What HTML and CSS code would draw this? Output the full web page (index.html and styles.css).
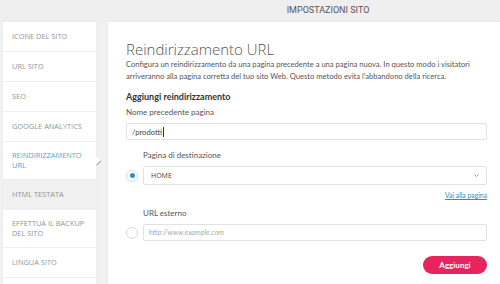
FILE: index.html
```html
<!DOCTYPE html>
<html lang="it">
<head>
    <meta charset="UTF-8" />
    <title>Impostazioni sito</title>
    <link rel="stylesheet" href="styles.css">
</head>
<body>
    <header class="topbar">IMPOSTAZIONI SITO</header>

    <div class="layout">
        <nav class="side">
            <ul>
                <li>ICONE DEL SITO</li>
                <li>URL SITO</li>
                <li>SEO</li>
                <li>GOOGLE ANALYTICS</li>
                <li class="active">REINDIRIZZAMENTO URL</li>
                <li class="hover">HTML TESTATA</li>
                <li class="tall">EFFETTUA IL BACKUP DEL SITO</li>
                <li>LINGUA SITO</li>
            </ul>
        </nav>

        <main class="panel">
            <h1>Reindirizzamento URL</h1>
            <p class="desc">Configura un reindirizzamento da una pagina precedente a una pagina nuova. In questo modo i visitatori arriveranno alla pagina corretta del tuo sito Web. Questo metodo evita l'abbandono della ricerca.</p>

            <h2>Aggiungi reindirizzamento</h2>
            <label class="label">Nome precedente pagina</label>
            <div class="field">/prodotti<span class="caret"></span></div>

            <div class="option first">
                <span class="label">Pagina di destinazione</span>
                <span class="radio checked"></span>
                <div class="field select">
                    HOME
                    <svg width="7" height="5" viewBox="0 0 7 5"><path d="M1.5 1.5 L3.5 3.5 L5.5 1.5" fill="none" stroke="#999" stroke-width="1"/></svg>
                </div>
            </div>
            <a class="goto" href="#">Vai alla pagina</a>

            <div class="option">
                <span class="label">URL esterno</span>
                <span class="radio"></span>
                <div class="field placeholder">http://www.example.com</div>
            </div>

            <div class="actions">
                <button class="add">Aggiungi</button>
            </div>
        </main>
    </div>
</body>
</html>
```

FILE: styles.css
```css
body {
    margin: 0;
    background-color: #f1f1f1;
    font-family: 'Lato', sans-serif;
    color: #555;
    height: 284px;
    overflow: hidden;
}

.topbar {
    height: 22px;
    line-height: 21px;
    padding-left: 156px;
    text-align: center;
    font-family: 'Liberation Sans Narrow', 'Roboto', sans-serif;
    font-size: 9px;
    color: #555;
    background-color: #efefef;
}

.layout {
    display: flex;
    gap: 12px;
    padding-left: 3px;
}

.side {
    width: 93px;
    flex: none;
    background: white;
    box-shadow: 0 0 2px rgba(0, 0, 0, 0.06);
}

.side ul {
    list-style: none;
    margin: 0;
    padding: 0;
}

.side li {
    position: relative;
    padding: 8.5px 6px 8.5px 9px;
    min-height: 12px;
    display: flex;
    align-items: center;
    font-family: 'Open Sans', sans-serif;
    font-size: 7.4px;
    line-height: 9.5px;
    color: #8f969b;
    border-bottom: 1px solid #eeeeee;
}

.side li.active,
.side li.tall {
    padding-top: 9px;
    padding-bottom: 9px;
}

.side li.active {
    color: #4aa6dd;
}

.side li.active::after {
    content: "";
    position: absolute;
    right: -4px;
    top: 16px;
    width: 6px;
    height: 6px;
    background: white;
    transform: rotate(45deg);
    border-right: 1px solid #8c8c8c;
}

.side li.hover {
    background-color: #f0f0f0;
}

.panel {
    flex: 1;
    background: white;
    padding: 17px 13px 20px 18px;
    box-shadow: 0 0 2px rgba(0, 0, 0, 0.06);
}

h1 {
    margin: 0;
    font-family: 'Open Sans', sans-serif;
    font-size: 15px;
    line-height: 20px;
    font-weight: 300;
    color: #555;
}

.desc {
    margin: 0 0 9px;
    font-size: 7.6px;
    line-height: 11.5px;
    color: #555;
}

h2 {
    margin: 0 0 3px;
    font-size: 9px;
    line-height: 12px;
    font-weight: 700;
    color: #333;
}

.label {
    display: block;
    font-size: 8px;
    line-height: 12px;
    color: #555;
}

.field {
    box-sizing: border-box;
    height: 17px;
    margin-top: 5px;
    border: 1px solid #dfe3e6;
    border-radius: 2px;
    padding: 0 5px;
    display: flex;
    align-items: center;
    font-size: 7.6px;
    color: #444;
}

.caret {
    width: 1px;
    height: 10px;
    background: #333;
    margin-left: 1px;
}

.option {
    display: grid;
    grid-template-columns: 17px 1fr;
    align-items: center;
}

.option.first {
    margin-top: 9px;
}

.option .label {
    grid-column: 2;
}

.option .radio {
    grid-column: 1;
    margin-top: 5px;
}

.option .field {
    grid-column: 2;
}

.select {
    height: 19px;
    justify-content: space-between;
    padding-left: 7px;
    padding-right: 6px;
    font-family: 'Open Sans', sans-serif;
    font-size: 7px;
}

.radio {
    box-sizing: border-box;
    width: 12px;
    height: 12px;
    border: 1px solid #dadada;
    border-radius: 50%;
    display: flex;
    align-items: center;
    justify-content: center;
}

.radio.checked::after {
    content: "";
    width: 5px;
    height: 5px;
    border-radius: 50%;
    background: #2b8fd6;
}

.goto {
    display: block;
    text-align: right;
    margin: 5px 0 7px;
    font-size: 6.8px;
    line-height: 10px;
    color: #3b88c4;
}

.placeholder {
    font-style: italic;
    color: #aaa;
    font-size: 7.2px;
}

.actions {
    display: flex;
    justify-content: flex-end;
    margin-top: 15px;
}

.add {
    width: 64px;
    height: 18px;
    border: none;
    border-radius: 9px;
    background-color: #e8245f;
    color: white;
    font-family: 'Lato', sans-serif;
    font-size: 8px;
    font-weight: 700;
    cursor: pointer;
}
```
